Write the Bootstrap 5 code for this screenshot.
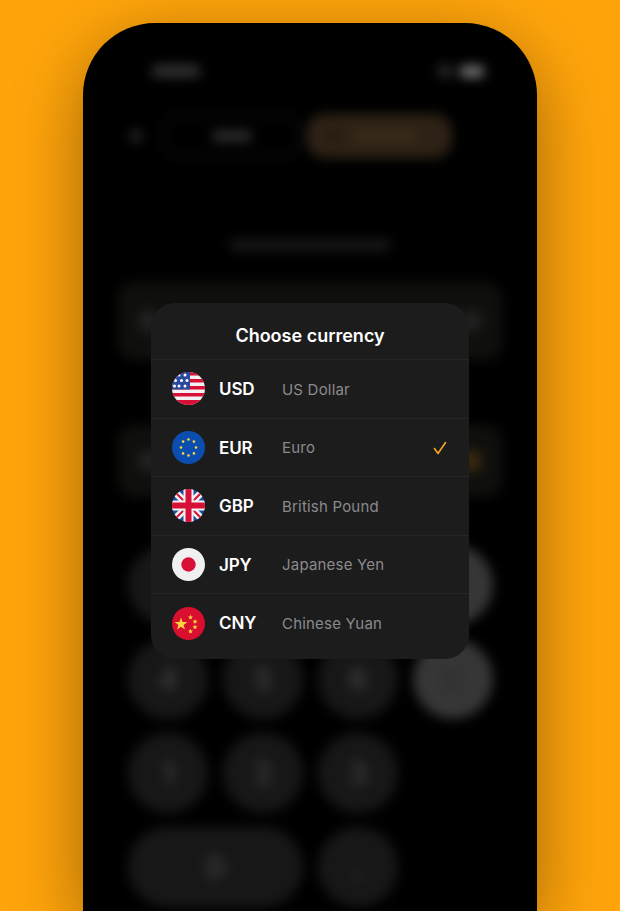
<!DOCTYPE html>
<html lang="en">
<head>
<meta charset="utf-8">
<title>Choose currency</title>
<link href="https://cdn.jsdelivr.net/npm/bootstrap@5.3.0/dist/css/bootstrap.min.css" rel="stylesheet">
<style>
html,body{height:100%;overflow:hidden}
body{background:#ffa40b;font-family:Inter,"Liberation Sans",sans-serif;color:#fff}
.handset{width:454px;height:888px;margin:23px auto 0;background:#000;border-radius:72px 72px 0 0;box-shadow:0 20px 70px rgba(0,0,0,.38);position:relative;overflow:hidden}
.blurred{filter:blur(6px);padding:40px 0 0}
.statusline{padding:0 53px 0 69px;height:16px}
.st-time{width:48px;height:12px;background:#333;border-radius:4px}
.st-sig{width:14px;height:14px;background:#2e2e2e;border-radius:50%}
.st-bat{width:24px;height:11px;background:#7a7a7a;border-radius:4px}
.toolrow{margin-top:35px;padding-left:47px;height:44px}
.tool-dot{width:12px;height:12px;border-radius:50%;background:#2c2c2c}
.tool-seg{width:140px;height:44px;margin-left:20px;border:2px solid #181818;border-radius:22px}
.tool-seg span{width:38px;height:10px;background:#333;border-radius:3px}
.tool-cta{width:145px;height:44px;margin-left:5px;background:#2e2216;border-radius:18px;padding-left:20px}
.tool-cta i{display:block;width:14px;height:14px;background:#261b10;margin-right:14px}
.tool-cta b{display:block;width:60px;height:12px;background:#3a2b1c;border-radius:3px}
.headline{width:160px;height:12px;margin:81px auto 0;background:#171717;border-radius:3px}
.panel{margin:31px 35px 0;height:78px;background:#0f0f0d;border-radius:16px;padding:0 20px}
.panel.second{margin-top:65px;height:72px}
.panel i{display:block;width:22px;height:22px;border-radius:50%;background:#222}
.panel .warm{background:#3a2a10}
.keys{display:grid;grid-template-columns:repeat(4,80px);grid-auto-rows:80px;gap:14px 15px;margin:48px 0 0 45px}
.kcap{background:#171717;border-radius:40px;font-size:30px;font-weight:600;color:#3e3e3e}
.kcap.wide{grid-column:span 2}
.kcap.lite{background:#363636;color:#2c2c2c}
.sheet{position:absolute;left:68px;top:280px;width:318px;background:#1c1c1d;border-radius:24px;overflow:hidden;padding-bottom:7px}
.sheet-title{height:56px;padding-top:9px;font-size:18px;font-weight:600;margin:0}
.cur-row{height:58.6px;border-top:1px solid #262627;padding:2px 22px 0 21px}
.flagdot{width:33px;height:33px;flex:none;margin-top:-2px}
.cur-code{width:63px;margin-left:14px;font-size:17px;font-weight:600;letter-spacing:-.1px}
.cur-name{font-size:15px;color:#8a8a8c;letter-spacing:.2px}
</style>
</head>
<body>
<div class="handset">
  <div class="blurred" aria-hidden="true">
    <div class="statusline d-flex align-items-center">
      <div class="st-time"></div>
      <div class="st-sig ms-auto"></div>
      <div class="st-bat ms-2"></div>
    </div>
    <div class="toolrow d-flex align-items-center">
      <div class="tool-dot"></div>
      <div class="tool-seg d-flex align-items-center justify-content-center"><span></span></div>
      <div class="tool-cta d-flex align-items-center"><i></i><b></b></div>
    </div>
    <div class="headline"></div>
    <div class="panel d-flex align-items-center justify-content-between"><i></i><i></i></div>
    <div class="panel second d-flex align-items-center justify-content-between"><i></i><i class="warm"></i></div>
    <div class="keys">
      <div class="kcap"></div>
      <div class="kcap"></div>
      <div class="kcap"></div>
      <div class="kcap lite"></div>
      <div class="kcap d-flex align-items-center justify-content-center">4</div>
      <div class="kcap d-flex align-items-center justify-content-center">5</div>
      <div class="kcap d-flex align-items-center justify-content-center">6</div>
      <div class="kcap lite d-flex align-items-center justify-content-center">C</div>
      <div class="kcap d-flex align-items-center justify-content-center">1</div>
      <div class="kcap d-flex align-items-center justify-content-center">2</div>
      <div class="kcap d-flex align-items-center justify-content-center">3</div>
      <div></div>
      <div class="kcap wide d-flex align-items-center justify-content-center">0</div>
      <div class="kcap d-flex align-items-center justify-content-center">.</div>
    </div>
  </div>

  <div class="sheet">
    <h1 class="sheet-title d-flex align-items-center justify-content-center">Choose currency</h1>

    <div class="cur-row d-flex align-items-center">
      <svg class="flagdot" viewBox="0 0 33 33">
        <defs><clipPath id="c1"><circle cx="16.5" cy="16.5" r="16.5"/></clipPath></defs>
        <g clip-path="url(#c1)">
          <rect width="33" height="33" fill="#f2f2f2"/>
          <g fill="#d80f36"><rect y="0" width="33" height="3.5"/><rect y="7" width="33" height="3.5"/><rect y="14" width="33" height="3.5"/><rect y="21" width="33" height="3.5"/><rect y="28" width="33" height="5"/></g>
          <rect width="18" height="17.5" fill="#2a4a9c"/>
          <g fill="#fff"><circle cx="7" cy="3" r="1.5"/><circle cx="13" cy="3" r="1.5"/><circle cx="3.5" cy="8.5" r="1.5"/><circle cx="9.5" cy="8.5" r="1.5"/><circle cx="15" cy="8.5" r="1.5"/><circle cx="2.5" cy="14" r="1.5"/><circle cx="7" cy="14" r="1.5"/><circle cx="13" cy="14" r="1.5"/></g>
        </g>
      </svg>
      <span class="cur-code">USD</span><span class="cur-name">US Dollar</span>
    </div>

    <div class="cur-row d-flex align-items-center">
      <svg class="flagdot" viewBox="0 0 33 33">
        <circle cx="16.5" cy="16.5" r="16.5" fill="#0b4eaf"/>
        <g fill="#f5d545"><circle cx="16.5" cy="8.5" r="1.3"/><circle cx="21.9" cy="10.6" r="1.3"/><circle cx="24" cy="16.5" r="1.3"/><circle cx="21.9" cy="22.4" r="1.3"/><circle cx="16.5" cy="24.5" r="1.3"/><circle cx="11.1" cy="22.4" r="1.3"/><circle cx="9" cy="16.5" r="1.3"/><circle cx="11.1" cy="10.6" r="1.3"/></g>
      </svg>
      <span class="cur-code">EUR</span><span class="cur-name">Euro</span>
      <svg class="ms-auto" width="14" height="14" viewBox="0 0 14 14" fill="none" stroke="#f5a623" stroke-width="1.6" stroke-linecap="round" stroke-linejoin="round"><path d="M1.5 7.5 5 12.5 12.5 1.5"/></svg>
    </div>

    <div class="cur-row d-flex align-items-center">
      <svg class="flagdot" viewBox="0 0 33 33">
        <defs><clipPath id="c3"><circle cx="16.5" cy="16.5" r="16.5"/></clipPath></defs>
        <g clip-path="url(#c3)">
          <rect width="33" height="33" fill="#1f4ea1"/>
          <path d="M0 0 33 33M33 0 0 33" stroke="#f2f2f2" stroke-width="7"/>
          <path d="M0 0 33 33M33 0 0 33" stroke="#d80f36" stroke-width="2"/>
          <path d="M16.5 0V33M0 16.5H33" stroke="#f2f2f2" stroke-width="10"/>
          <path d="M16.5 0V33M0 16.5H33" stroke="#d80f36" stroke-width="6"/>
        </g>
      </svg>
      <span class="cur-code">GBP</span><span class="cur-name">British Pound</span>
    </div>

    <div class="cur-row d-flex align-items-center">
      <svg class="flagdot" viewBox="0 0 33 33">
        <circle cx="16.5" cy="16.5" r="16.5" fill="#f0f0f0"/>
        <circle cx="16.5" cy="16.5" r="7.2" fill="#d80f36"/>
      </svg>
      <span class="cur-code">JPY</span><span class="cur-name">Japanese Yen</span>
    </div>

    <div class="cur-row d-flex align-items-center">
      <svg class="flagdot" viewBox="0 0 33 33">
        <circle cx="16.5" cy="16.5" r="16.5" fill="#d80f2e"/>
        <g fill="#ffd23f">
          <polygon points="9,10.5 10.6,15 15.4,15 11.6,17.9 13,22.5 9,19.8 5,22.5 6.4,17.9 2.6,15 7.4,15"/>
          <polygon points="18.5,7.6 19.2,9.4 21.1,9.4 19.6,10.6 20.1,12.4 18.5,11.4 16.9,12.4 17.4,10.6 15.9,9.4 17.8,9.4"/>
          <polygon points="23,12 23.7,13.8 25.6,13.8 24.1,15 24.6,16.8 23,15.8 21.4,16.8 21.9,15 20.4,13.8 22.3,13.8"/>
          <polygon points="23,17.5 23.7,19.3 25.6,19.3 24.1,20.5 24.6,22.3 23,21.3 21.4,22.3 21.9,20.5 20.4,19.3 22.3,19.3"/>
          <polygon points="18.5,21.8 19.2,23.6 21.1,23.6 19.6,24.8 20.1,26.6 18.5,25.6 16.9,26.6 17.4,24.8 15.9,23.6 17.8,23.6"/>
        </g>
      </svg>
      <span class="cur-code">CNY</span><span class="cur-name">Chinese Yuan</span>
    </div>
  </div>
</div>
<script src="https://cdn.jsdelivr.net/npm/bootstrap@5.3.0/dist/js/bootstrap.bundle.min.js"></script>
</body>
</html>
